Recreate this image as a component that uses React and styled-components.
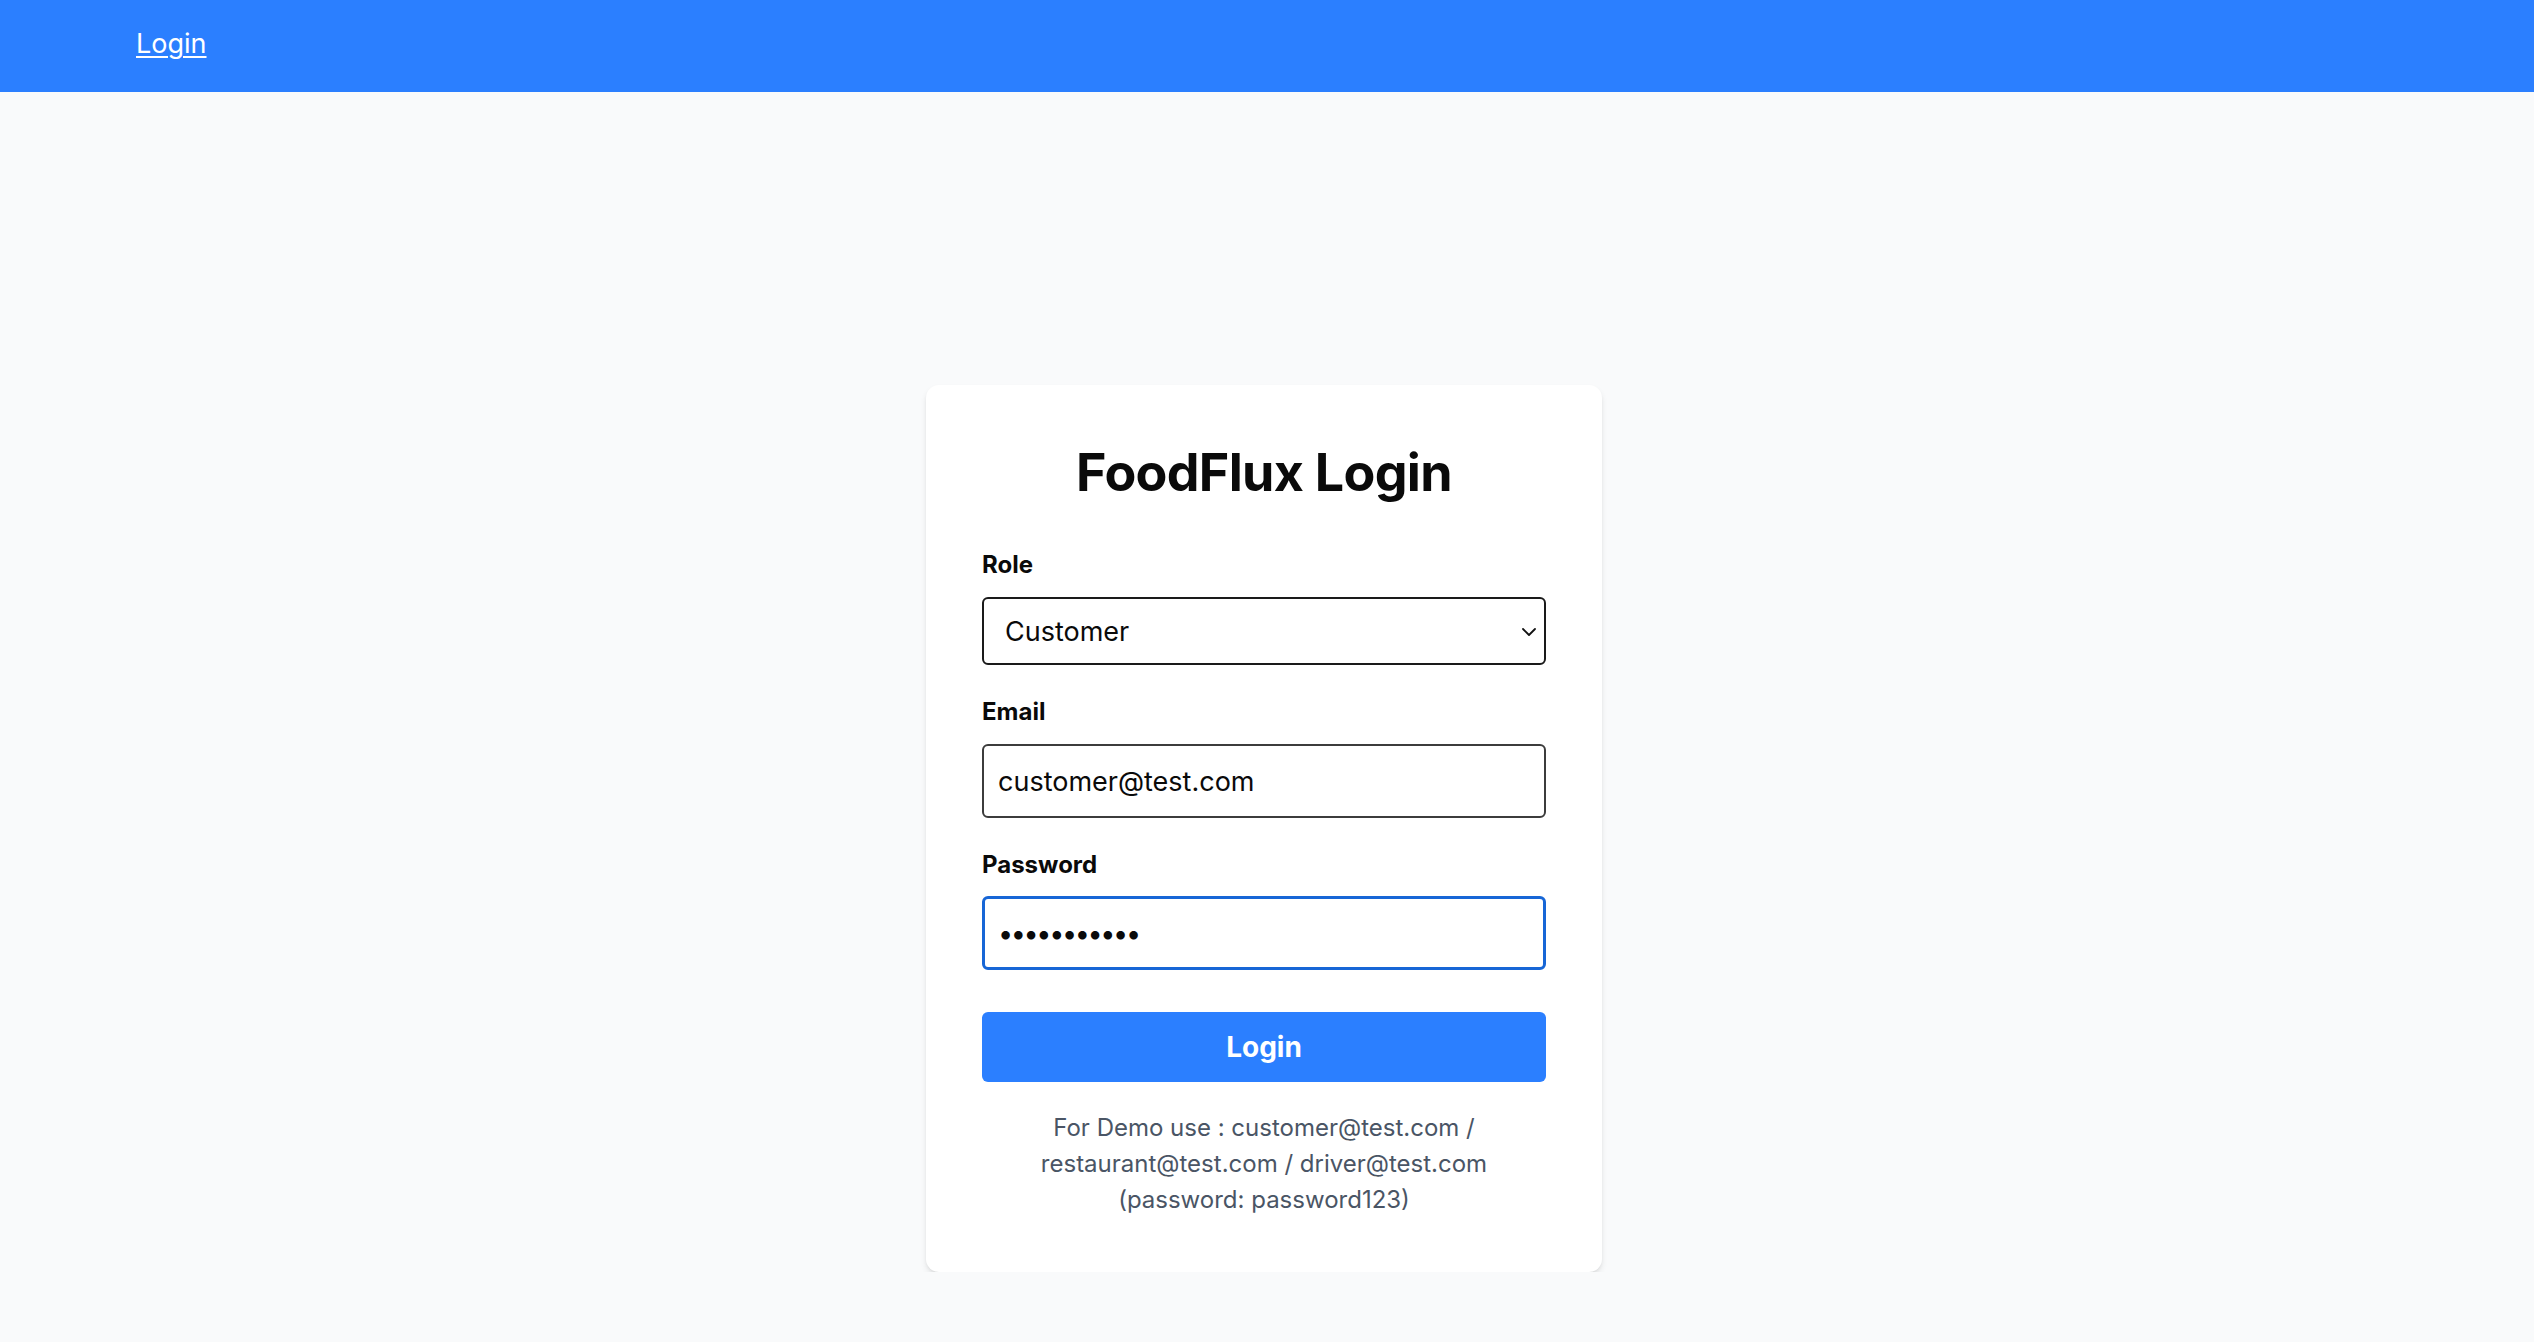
import React, { useEffect, useRef } from 'react'
import styled, { createGlobalStyle } from "styled-components";

const GlobalStyle = createGlobalStyle`
  html, body {
    margin: 0;
    padding: 0;
    background: #f9fafb;
    font-family: Inter, "Noto Sans", "Liberation Sans", sans-serif;
  }
  * { box-sizing: border-box; }
`;

const App = () => {
    const passRef = useRef(null);

    useEffect(() => {
        const el = passRef.current;
        if (el) {
            el.focus();
            el.setSelectionRange(el.value.length, el.value.length);
        }
    }, []);

    return (
        <>
            <GlobalStyle />
            <NavBar>
                <NavLink href="#">Login</NavLink>
            </NavBar>
            <Main>
                <Card>
                    <Title>FoodFlux Login</Title>
                    <Field>
                        <Label>Role</Label>
                        <SelectWrap>
                            <Select defaultValue="customer">
                                <option value="customer">Customer</option>
                                <option value="restaurant">Restaurant</option>
                                <option value="driver">Driver</option>
                            </Select>
                            <Chevron viewBox="0 0 16 10" aria-hidden="true">
                                <path d="M2 2 L8 8 L14 2" fill="none" stroke="#111" strokeWidth="1.8" strokeLinecap="round" strokeLinejoin="round" />
                            </Chevron>
                        </SelectWrap>
                    </Field>
                    <Field>
                        <Label>Email</Label>
                        <Input type="email" defaultValue="customer@test.com" />
                    </Field>
                    <Field $last>
                        <Label>Password</Label>
                        <Input ref={passRef} type="password" defaultValue="password123" $focused />
                    </Field>
                    <Button type="button">Login</Button>
                    <Demo>
                        For Demo use : customer@test.com /<br />
                        restaurant@test.com / driver@test.com<br />
                        (password: password123)
                    </Demo>
                </Card>
            </Main>
        </>
    )
}

export default App

const NavBar = styled.nav`
  height: 92px;
  background: #2b7fff;
  display: flex;
  align-items: center;
  padding: 0 136px;
`;

const NavLink = styled.a`
  color: #fff;
  font-size: 27px;
  text-decoration: underline;
  text-underline-offset: 3px;
  text-decoration-thickness: 2px;
  margin-top: -6px;
`;

const Main = styled.main`
  display: flex;
  justify-content: center;
  padding: 293px 6px 0 0;
`;

const Card = styled.div`
  width: 676px;
  background: #fff;
  border-radius: 13px;
  padding: 56px 56px 54px;
  box-shadow: 0 4px 7px -1px rgba(0, 0, 0, 0.11), 0 2px 4px -2px rgba(0, 0, 0, 0.1);
  display: flex;
  flex-direction: column;
`;

const Title = styled.h1`
  margin: 0 0 47px;
  font-size: 52px;
  line-height: 63px;
  font-weight: 700;
  text-align: center;
  color: #0a0a0a;
  letter-spacing: -0.7px;
`;

const Field = styled.div`
  display: flex;
  flex-direction: column;
  gap: ${p => p.$last ? "17px" : "18px"};
  margin-bottom: 33px;
`;

const Label = styled.label`
  font-size: 24px;
  line-height: 28px;
  font-weight: 700;
  color: #0a0a0a;
`;

const SelectWrap = styled.div`
  position: relative;
`;

const Select = styled.select`
  appearance: none;
  width: 100%;
  height: 68px;
  border: 2px solid #1a1a1a;
  border-radius: 6px;
  background: #fff;
  padding: 0 40px 0 21px;
  font-family: inherit;
  font-size: 27px;
  color: #0a0a0a;
  outline: none;
`;

const Chevron = styled.svg`
  position: absolute;
  right: 9px;
  top: 50%;
  width: 16px;
  height: 10px;
  margin-top: -4px;
  pointer-events: none;
`;

const Input = styled.input`
  width: 100%;
  height: 74px;
  border: ${p => p.$focused ? "3px solid #1766d6" : "2px solid #3c3c3c"};
  border-radius: 6px;
  padding: 0 ${p => p.$focused ? "13px" : "14px"};
  font-family: inherit;
  font-size: 27px;
  letter-spacing: ${p => p.type === "password" ? "-2.4px" : "normal"};
  color: #0a0a0a;
  background: #fff;
  outline: none;
  caret-color: #000;
`;

const Button = styled.button`
  margin-top: 9px;
  height: 70px;
  border: none;
  border-radius: 6px;
  background: #2b7fff;
  color: #fff;
  font-family: inherit;
  font-size: 28px;
  font-weight: 700;
  cursor: pointer;
`;

const Demo = styled.p`
  margin: 28px 0 0;
  text-align: center;
  font-size: 24px;
  line-height: 36px;
  color: #4a5565;
`;
